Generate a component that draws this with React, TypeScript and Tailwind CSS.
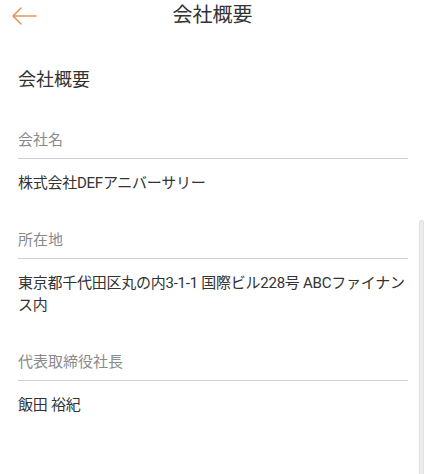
import React from "react";

const font = { fontFamily: 'Roboto, "Noto Sans CJK JP", "Noto Sans", sans-serif' };

function Field({ label, value, mb }: { label: string; value: React.ReactNode; mb?: string }) {
  return (
    <div className={mb ?? "mb-[35px]"}>
      <div className="text-[15px] leading-[22px] text-[#8a8a8a] pb-[7px] border-b border-[#cfcfcf]">{label}</div>
      <div className="pt-[13px] text-[15px] leading-[22px] tracking-[-0.25px] text-[#333333]">{value}</div>
    </div>
  );
}

export default function App() {
  return (
    <div className="relative w-[425px] h-[474px] overflow-hidden bg-white" style={font}>
      <div className="relative h-[30px] flex items-center justify-center">
        <svg className="absolute left-[11px] top-[6px]" width="26" height="20" viewBox="0 0 26 20" fill="none">
          <path d="M25 10H2M10 2L2 10l8 8" stroke="#e3955d" strokeWidth="1.6" strokeLinecap="round" strokeLinejoin="round" />
        </svg>
        <div className="text-[20px] leading-[30px] text-[#333333]">会社概要</div>
      </div>
      <div className="pl-[18px] w-[408px]">
        <div className="mt-[37px] mb-[36px] text-[18px] leading-[26px] text-[#333333]">会社概要</div>
        <Field label="会社名" value="株式会社DEFアニバーサリー" />
        <Field label="所在地" value="東京都千代田区丸の内3-1-1 国際ビル228号 ABCファイナンス内" />
        <Field label="代表取締役社長" value="飯田 裕紀" mb="mb-0" />
      </div>
      <div className="absolute right-[1px] top-[220px] w-[5px] h-[260px] rounded-[2px] bg-[#ececec] border border-[#e0e0e0]" />
    </div>
  );
}
